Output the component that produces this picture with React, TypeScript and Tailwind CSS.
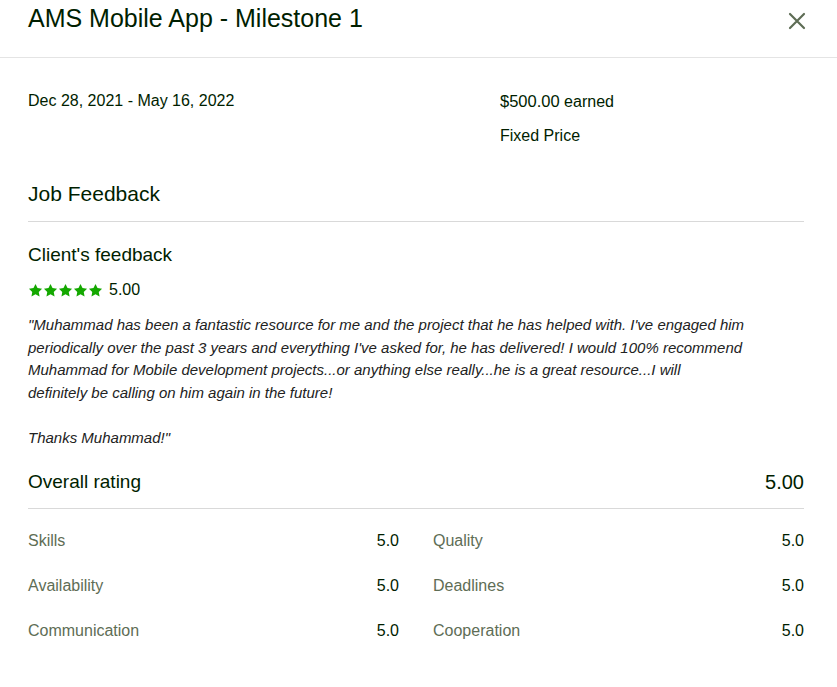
const font = { fontFamily: '"Liberation Sans", Arial, sans-serif' };

function Star() {
  return (
    <svg width="15" height="15" viewBox="0 0 24 24" className="fill-[#14a800]">
      <path d="M12 1.5l3.2 6.6 7.3 1-5.3 5.1 1.3 7.2L12 18l-6.5 3.4 1.3-7.2L1.5 9.1l7.3-1z" />
    </svg>
  );
}

const ratings = [
  ["Skills", "5.0", "Quality", "5.0"],
  ["Availability", "5.0", "Deadlines", "5.0"],
  ["Communication", "5.0", "Cooperation", "5.0"],
];

export default function App() {
  return (
    <div className="bg-white text-[#001e00] min-h-screen w-[837px]" style={font}>
      <header className="flex justify-between items-start h-[58px] border-b border-[#e4e4e4] pl-[28px] pr-[30px] pt-[3px]">
        <h1 className="text-[25px] leading-[30px]">AMS Mobile App - Milestone 1</h1>
        <button className="mt-[8px] text-[#5e6d55]">
          <svg width="20" height="20" viewBox="0 0 20 20" stroke="currentColor" strokeWidth="2.2" strokeLinecap="round">
            <path d="M3 3l14 14M17 3L3 17" />
          </svg>
        </button>
      </header>

      <main className="pl-[28px] pr-[33px] pt-[32px]">
        <div className="grid grid-cols-[472px_1fr] text-[16px] leading-[22px]">
          <div>Dec 28, 2021 - May 16, 2022</div>
          <div className="flex flex-col gap-[12px]">
            <div>
              <span className="text-[16.5px]">$500.00</span> earned
            </div>
            <div>Fixed Price</div>
          </div>
        </div>

        <h2 className="mt-[33px] text-[21px] leading-[28px] pb-[13px] border-b border-[#d9d9d9]">Job Feedback</h2>

        <h3 className="mt-[20px] text-[19px] leading-[26px]">Client's feedback</h3>
        <div className="mt-[12px] flex items-center h-[20px] gap-[6px]">
          <div className="flex">
            <Star />
            <Star />
            <Star />
            <Star />
            <Star />
          </div>
          <span className="text-[16px]">5.00</span>
        </div>

        <p className="mt-[14px] text-[15px] leading-[22.5px] italic text-[#222]">
          "Muhammad has been a fantastic resource for me and the project that he has helped with. I've engaged him
          <br />
          periodically over the past 3 years and everything I've asked for, he has delivered! I would 100% recommend
          <br />
          Muhammad for Mobile development projects...or anything else really...he is a great resource...I will
          <br />
          definitely be calling on him again in the future!
          <br />
          <br />
          Thanks Muhammad!"
        </p>

        <div className="mt-[19px] flex justify-between items-center pb-[12px] border-b border-[#d9d9d9]">
          <span className="text-[19px] leading-[26px]">Overall rating</span>
          <span className="text-[20px] leading-[28px]">5.00</span>
        </div>

        <div className="mt-[21px] flex flex-col gap-[23px] text-[16px] leading-[22px]">
          {ratings.map(([a, av, b, bv]) => (
            <div key={a} className="grid grid-cols-2 gap-[34px]">
              <div className="flex justify-between">
                <span className="text-[#5e6d55]">{a}</span>
                <span>{av}</span>
              </div>
              <div className="flex justify-between">
                <span className="text-[#5e6d55]">{b}</span>
                <span>{bv}</span>
              </div>
            </div>
          ))}
        </div>
      </main>
    </div>
  );
}
